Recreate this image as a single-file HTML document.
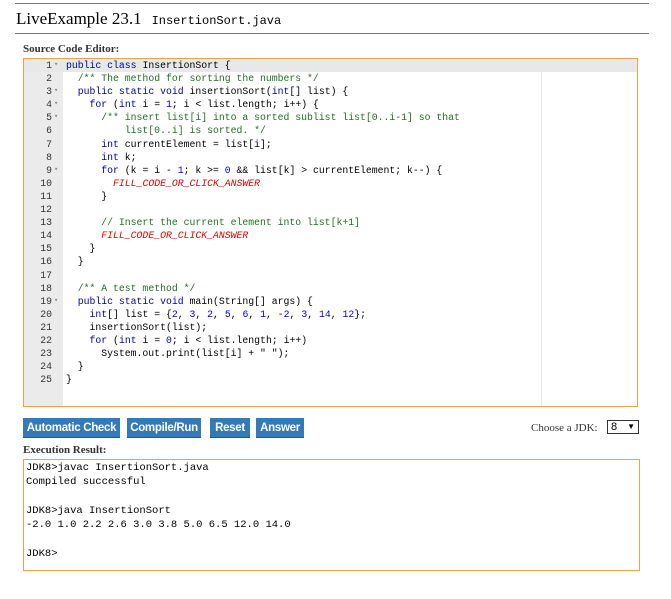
<!DOCTYPE html>
<html><head><style>
body{margin:0;background:#fff;width:671px;height:599px;position:relative;font-family:"Liberation Serif",serif;overflow:hidden}
.hr{position:absolute;left:15px;width:634px;height:1px;background:#777}
.title{position:absolute;left:16px;top:9px;font-size:17px;color:#000}
.title span{font-family:"Liberation Mono",monospace;font-size:12px;margin-left:10px}
.lbl{position:absolute;left:23px;font-size:11px;font-weight:bold;color:#333}
.ed{position:absolute;left:23px;top:58px;width:615px;height:349px;border:1px solid #f0a050;box-sizing:border-box;background:#fff;overflow:hidden}
.gut{position:absolute;left:0;top:0;width:39px;height:100%;background:#ebebeb}
.pm{position:absolute;left:517px;top:0;width:1px;height:100%;background:#e8e8e8}
.act{position:absolute;left:0;top:0;width:100%;height:13px;background:#e8e8e8}
.code{position:absolute;left:0;top:0;font-family:"Liberation Mono",monospace;font-size:9.8px;line-height:13.1px;white-space:pre}
.ln{display:inline-block;width:28px;text-align:right;color:#333;margin-right:14px;position:relative}
.f:after{content:"\25BE";position:absolute;left:30px;top:0;font-size:7px;color:#888}
.k{color:#0000a2}.c{color:#236e24}.n{color:#0000cd}.r{color:#e00;font-style:italic}
.btn{position:absolute;top:418px;height:20px;background:#337ab7;color:#fff;font-family:"Liberation Sans",sans-serif;font-weight:bold;font-size:11.5px;line-height:20px;text-align:center;border-bottom:1px solid #245a8a;box-sizing:border-box;letter-spacing:-0.3px}
.res{position:absolute;left:23px;top:459px;width:617px;height:112px;border:1px solid #f0a050;box-sizing:border-box;font-family:"Liberation Mono",monospace;font-size:10.5px;line-height:14.3px;white-space:pre;padding:1px 2px}
</style></head><body>
<div class="hr" style="top:3px"></div>
<div class="title">LiveExample 23.1<span>InsertionSort.java</span></div>
<div class="hr" style="top:33px"></div>
<div class="lbl" style="top:43px">Source Code Editor:</div>
<div class="ed"><div class="gut"></div><div class="act"></div><div class="pm"></div>
<div class="code"><span class="ln f">1</span><span class="k">public class</span> InsertionSort {
<span class="ln">2</span>  <span class="c">/** The method for sorting the numbers */</span>
<span class="ln f">3</span>  <span class="k">public static void</span> insertionSort(<span class="k">int</span>[] list) {
<span class="ln f">4</span>    <span class="k">for</span> (<span class="k">int</span> i = <span class="n">1</span>; i &lt; list.length; i++) {
<span class="ln f">5</span>      <span class="c">/** insert list[i] into a sorted sublist list[0..i-1] so that</span>
<span class="ln">6</span><span class="c">          list[0..i] is sorted. */</span>
<span class="ln">7</span>      <span class="k">int</span> currentElement = list[i];
<span class="ln">8</span>      <span class="k">int</span> k;
<span class="ln f">9</span>      <span class="k">for</span> (k = i - <span class="n">1</span>; k &gt;= <span class="n">0</span> &amp;&amp; list[k] &gt; currentElement; k--) {
<span class="ln">10</span>        <span class="r">FILL_CODE_OR_CLICK_ANSWER</span>
<span class="ln">11</span>      }
<span class="ln">12</span>
<span class="ln">13</span>      <span class="c">// Insert the current element into list[k+1]</span>
<span class="ln">14</span>      <span class="r">FILL_CODE_OR_CLICK_ANSWER</span>
<span class="ln">15</span>    }
<span class="ln">16</span>  }
<span class="ln">17</span>
<span class="ln">18</span>  <span class="c">/** A test method */</span>
<span class="ln f">19</span>  <span class="k">public static void</span> main(String[] args) {
<span class="ln">20</span>    <span class="k">int</span>[] list = {<span class="n">2</span>, <span class="n">3</span>, <span class="n">2</span>, <span class="n">5</span>, <span class="n">6</span>, <span class="n">1</span>, -<span class="n">2</span>, <span class="n">3</span>, <span class="n">14</span>, <span class="n">12</span>};
<span class="ln">21</span>    insertionSort(list);
<span class="ln">22</span>    <span class="k">for</span> (<span class="k">int</span> i = <span class="n">0</span>; i &lt; list.length; i++)
<span class="ln">23</span>      System.out.print(list[i] + " ");
<span class="ln">24</span>  }
<span class="ln">25</span>}</div></div>
<div class="btn" style="left:23px;width:97px">Automatic Check</div>
<div class="btn" style="left:127px;width:74px">Compile/Run</div>
<div class="btn" style="left:210px;width:40px">Reset</div>
<div class="btn" style="left:256px;width:48px">Answer</div>
<div style="position:absolute;left:531px;top:422px;font-size:11px;color:#333">Choose a JDK:</div>
<div style="position:absolute;left:607px;top:420px;width:32px;height:14px;border:1px solid #333;box-sizing:border-box;font-family:'Liberation Sans',sans-serif;font-size:11px;line-height:12px;padding-left:3px">8 <span style="position:absolute;right:3px;top:0;font-size:8px;font-weight:bold">&#9660;</span></div>
<div class="lbl" style="top:444px">Execution Result:</div>
<div class="res">JDK8&gt;javac InsertionSort.java
Compiled successful

JDK8&gt;java InsertionSort
-2.0 1.0 2.2 2.6 3.0 3.8 5.0 6.5 12.0 14.0

JDK8&gt;</div>
</body></html>
